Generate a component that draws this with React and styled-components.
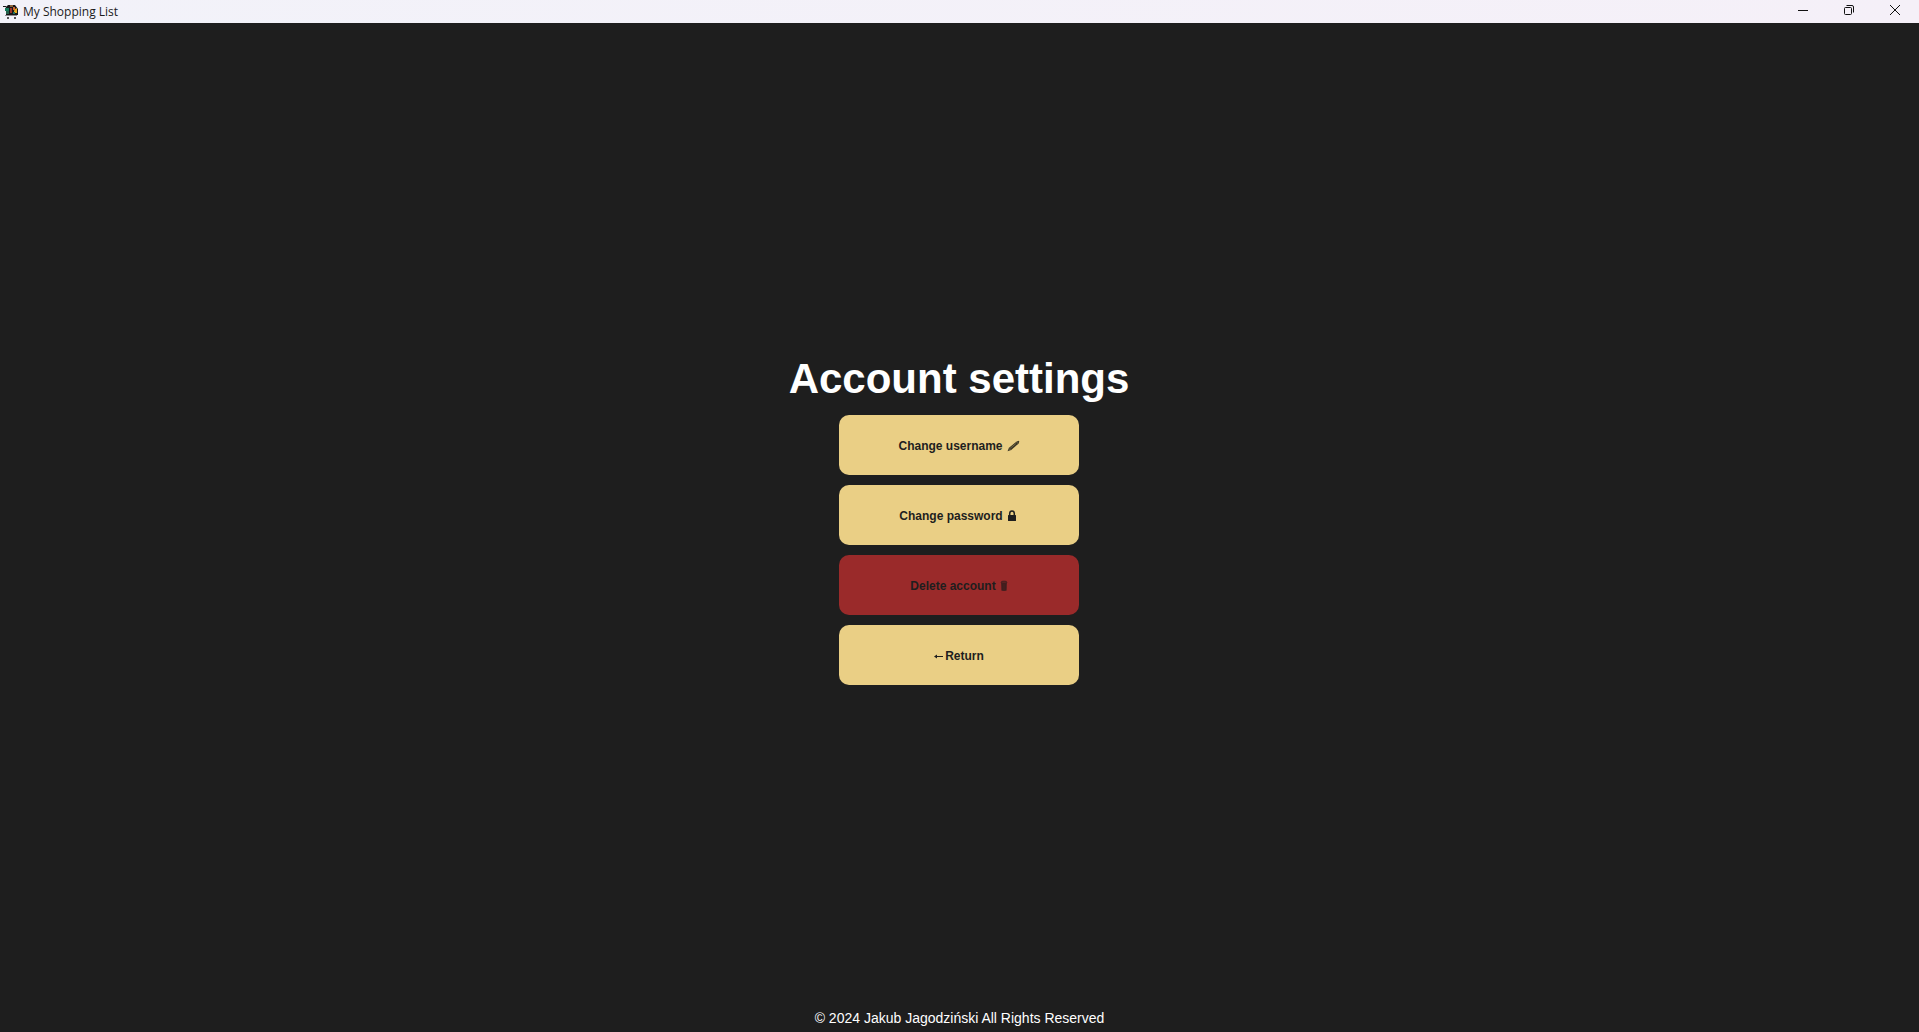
import React from 'react';
import styled, { createGlobalStyle } from 'styled-components';

const GlobalStyle = createGlobalStyle`
  * { box-sizing: border-box; }
  html, body { margin: 0; background: #1e1e1e; }
`;

const Window = styled.div`
  min-height: 100vh;
  display: flex;
  flex-direction: column;
  background: #1e1e1e;
  font-family: "Liberation Sans", Arial, sans-serif;
`;

const TitleBar = styled.header`
  display: flex;
  align-items: center;
  height: 23px;
  padding-left: 3px;
  gap: 4px;
  background: linear-gradient(90deg, #f2f2f9, #f5f0f8);
`;

const AppName = styled.span`
  flex: 1;
  color: #1b1b1b;
  font: 12px/23px "Open Sans", "Noto Sans", sans-serif;
`;

const Controls = styled.div`
  display: flex;
`;

const ControlButton = styled.button`
  display: flex;
  align-items: center;
  justify-content: center;
  width: 46px;
  height: 23px;
  padding: 0 2px 3px 0;
  border: 0;
  background: transparent;
  color: #111;
`;

const Main = styled.main`
  flex: 1;
  display: flex;
  flex-direction: column;
  align-items: center;
  justify-content: center;
  padding-right: 1px;
`;

const Title = styled.h1`
  margin: 0;
  padding: 14px 0 12px;
  color: #fff;
  font-size: 42px;
  line-height: 48px;
  font-weight: 700;
`;

const Actions = styled.div`
  display: flex;
  flex-direction: column;
  gap: 10px;
`;

const ActionButton = styled.button`
  display: flex;
  align-items: center;
  justify-content: center;
  gap: ${({ $gap }) => $gap || 4}px;
  width: 240px;
  height: 60px;
  padding: 2px 0 0;
  border: 0;
  border-radius: 10px;
  background: ${({ $danger }) => ($danger ? '#9a2a2a' : '#eacf85')};
  color: #1e1e1e;
  font: 700 12px/16px "Liberation Sans", Arial, sans-serif;
`;

const Footer = styled.footer`
  height: 29px;
  padding-top: 1px;
  color: #fff;
  font-size: 14px;
  line-height: 28px;
  text-align: center;
`;

const CartLogo = () => (
  <svg width="16" height="16" viewBox="0 0 16 16" aria-hidden="true">
    <path d="M0 2.500h3l2 7" fill="none" stroke="#1c1c1c" />
    <path d="M5 1h7l3 4v6H3V3z" fill="#171717" />
    <path d="M2 4h4v3H2z" fill="#147a5a" />
    <path d="M3 7h3v3H3z" fill="#25614c" />
    <path d="M7 1h3v2H7z" fill="#8a6238" />
    <path d="M7 4h2v5H7z" fill="#9a3429" />
    <path d="M10 3h2v3h-2z" fill="#cf6630" />
    <path d="M12 5l2-1v5h-3V7z" fill="#e5a91b" />
    <path d="M10 8h2v2h-2z" fill="#20705c" />
    <path d="M2 11.500h12" stroke="#8c8c92" />
    <circle cx="5" cy="14" r="1" fill="#222" />
    <circle cx="12" cy="14" r="1" fill="#222" />
  </svg>
);

const PencilIcon = () => (
  <svg width="13" height="12" viewBox="0 0 13 12" aria-hidden="true">
    <path d="M.5 11.300l1.500-3.600L9.300 1.700l2.300-1 .7.800-.8 2.200L4.200 9.900z" fill="#3a3524" />
    <path d="M3.300 8.200l5.500-4.600M9.300 1.700l2 2.200M1.800 8.300l1.900 1.900" stroke="#9c8b5a" strokeWidth=".6" />
  </svg>
);

const LockIcon = () => (
  <svg width="14" height="12" viewBox="0 0 14 12" aria-hidden="true">
    <path d="M4.700 6V3.500a2.300 2.600 0 0 1 4.600 0V6" fill="none" stroke="#1e1e1e" strokeWidth="1.500" />
    <rect x="3" y="5" width="8" height="6" rx=".5" fill="#1e1e1e" />
  </svg>
);

const TrashIcon = () => (
  <svg width="8" height="12" viewBox="0 0 8 12" aria-hidden="true">
    <path d="M1 2.500l.3 8q2.700 1 5.400 0l.3-8z" fill="#4d2020" />
    <ellipse cx="4" cy="2.200" rx="3" ry="1.100" fill="#672323" stroke="#351d1d" strokeWidth=".7" />
    <path d="M2.500 4v6M4 4v6.500M5.500 4v6" stroke="#351d1d" strokeWidth=".6" />
  </svg>
);

const ArrowIcon = () => (
  <svg width="9" height="6" viewBox="0 0 9 6" aria-hidden="true">
    <path d="M1 3.500h8" fill="none" stroke="#1e1e1e" />
    <path d="M0 3.500l3-2v4z" fill="#1e1e1e" />
  </svg>
);

const MinimizeIcon = () => (
  <svg width="10" height="10" viewBox="0 0 10 10" aria-hidden="true">
    <path d="M0 5.500h10" stroke="currentColor" />
  </svg>
);

const RestoreIcon = () => (
  <svg width="10" height="10" viewBox="0 0 10 10" fill="none" stroke="currentColor" aria-hidden="true">
    <rect x=".5" y="2.500" width="7" height="7" rx="1" />
    <path d="M2.500.5H8A1.500 1.500 0 0 1 9.500 2v5.500" />
  </svg>
);

const CloseIcon = () => (
  <svg width="10" height="10" viewBox="0 0 10 10" aria-hidden="true">
    <path d="M0 0l10 10M10 0L0 10" stroke="currentColor" />
  </svg>
);

export default function App() {
  return (
    <Window>
      <GlobalStyle />
      <TitleBar>
        <CartLogo />
        <AppName>My Shopping List</AppName>
        <Controls>
          <ControlButton aria-label="Minimize"><MinimizeIcon /></ControlButton>
          <ControlButton aria-label="Restore"><RestoreIcon /></ControlButton>
          <ControlButton aria-label="Close"><CloseIcon /></ControlButton>
        </Controls>
      </TitleBar>
      <Main>
        <Title>Account settings</Title>
        <Actions>
          <ActionButton>Change username<PencilIcon /></ActionButton>
          <ActionButton $gap={2}>Change password<LockIcon /></ActionButton>
          <ActionButton $danger>Delete account<TrashIcon /></ActionButton>
          <ActionButton $gap={2}><ArrowIcon />Return</ActionButton>
        </Actions>
      </Main>
      <Footer>© 2024 Jakub Jagodziński All Rights Reserved</Footer>
    </Window>
  );
}
